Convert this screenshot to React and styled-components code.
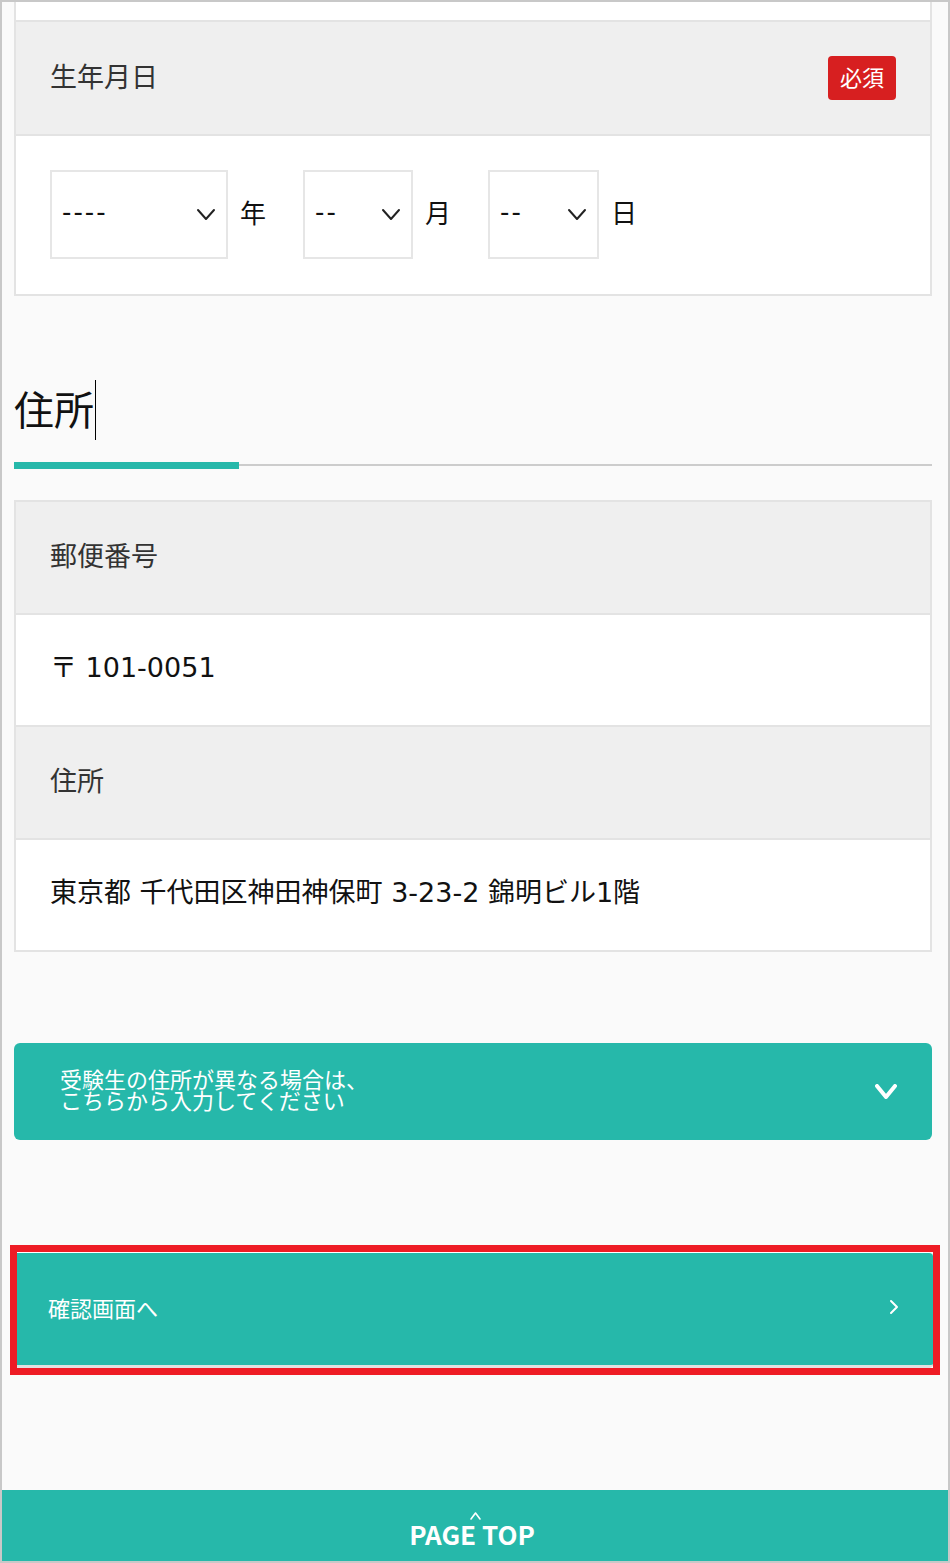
import React from "react";
import styled, { createGlobalStyle } from "styled-components";

const GlobalStyle = createGlobalStyle`
  html, body {
    margin: 0;
    padding: 0;
  }
  body {
    background: #fafafa;
    font-family: "Noto Sans CJK JP", "Noto Sans", sans-serif;
    color: #222;
  }
  * {
    box-sizing: border-box;
  }
`;

const TEAL = "#26b8aa";
const LINE = "#e3e3e3";
const WIDE = `"DejaVu Sans", "Noto Sans CJK JP", sans-serif`;

function Chevron({ dir = "down", w, h, stroke, color }) {
  const pts = {
    down: `2,2 ${w / 2},${h - 2} ${w - 2},2`,
    up: `2,${h - 2} ${w / 2},2 ${w - 2},${h - 2}`,
    right: `2,2 ${w - 2},${h / 2} 2,${h - 2}`,
  }[dir];
  return (
    <svg width={w} height={h} viewBox={`0 0 ${w} ${h}`}>
      <polyline
        points={pts}
        fill="none"
        stroke={color}
        strokeWidth={stroke}
        strokeLinecap="round"
        strokeLinejoin="round"
      />
    </svg>
  );
}

function DateSelect({ width, value, unit }) {
  return (
    <DateGroup>
      <SelectBox $w={width}>
        <SelectValue>{value}</SelectValue>
        <Chevron w={20} h={13} stroke={2} color="#222" />
      </SelectBox>
      <Unit>{unit}</Unit>
    </DateGroup>
  );
}

export default function App() {
  return (
    <>
      <GlobalStyle />
      <Frame>
        <Content>
          <Table $cut>
            <Row $h={18} />
            <Row $head $h={114}>
              <Label>生年月日</Label>
              <Badge>必須</Badge>
            </Row>
            <Row $h={160}>
              <DateRow>
                <DateSelect width={178} value="----" unit="年" />
                <DateSelect width={110} value="--" unit="月" />
                <DateSelect width={111} value="--" unit="日" />
              </DateRow>
            </Row>
          </Table>

          <SectionTitle>
            <Caret>住所</Caret>
          </SectionTitle>
          <Underline />

          <Table $mt={31}>
            <Row $head $h={111}>
              <Label>郵便番号</Label>
            </Row>
            <Row $h={112}>
              <Value>〒 101-0051</Value>
            </Row>
            <Row $head $h={113}>
              <Label>住所</Label>
            </Row>
            <Row $h={112}>
              <Value>東京都 千代田区神田神保町 3-23-2 錦明ビル1階</Value>
            </Row>
          </Table>

          <Accordion>
            <AccordionText>
              受験生の住所が異なる場合は、
              <br />
              こちらから入力してください
            </AccordionText>
            <Chevron w={22} h={15} stroke={4} color="#fff" />
          </Accordion>

          <Highlight>
            <ConfirmButton>
              <span>確認画面へ</span>
              <Chevron dir="right" w={10} h={16} stroke={2} color="#fff" />
            </ConfirmButton>
          </Highlight>
        </Content>

        <Footer>
          <Chevron dir="up" w={13} h={10} stroke={1.6} color="#fff" />
          <FooterText>PAGE TOP</FooterText>
        </Footer>
      </Frame>
    </>
  );
}

const Frame = styled.div`
  width: 950px;
  height: 1563px;
  border: 2px solid #c8c8c8;
  background: #fafafa;
  overflow: hidden;
  display: flex;
  flex-direction: column;
`;

const Content = styled.div`
  padding: 0 16px 0 12px;
  display: flex;
  flex-direction: column;
`;

const Table = styled.div`
  margin-top: ${(p) => p.$mt || 0}px;
  border: 2px solid ${LINE};
  border-top: ${(p) => (p.$cut ? "none" : `2px solid ${LINE}`)};
  background: #fff;
`;

const Row = styled.div`
  height: ${(p) => p.$h}px;
  display: flex;
  align-items: center;
  justify-content: space-between;
  padding: 0 34px 5px;
  background: ${(p) => (p.$head ? "#efefef" : "#fff")};

  & + & {
    border-top: 2px solid ${LINE};
  }
`;

const Label = styled.div`
  font-size: 27px;
  line-height: 36px;
  color: #333;
`;

const Value = styled.div`
  font-family: ${WIDE};
  font-size: 27px;
  line-height: 36px;
  color: #111;
`;

const Badge = styled.div`
  width: 68px;
  height: 44px;
  margin-top: 4px;
  border-radius: 4px;
  background: #d71f20;
  color: #fff;
  font-size: 22px;
  display: flex;
  align-items: center;
  justify-content: center;
  padding-bottom: 3px;
`;

const DateRow = styled.div`
  display: flex;
  align-items: center;
  gap: 37px;
  margin-top: 4px;
`;

const DateGroup = styled.div`
  display: flex;
  align-items: center;
  gap: 12px;
`;

const SelectBox = styled.div`
  width: ${(p) => p.$w}px;
  height: 89px;
  border: 2px solid #e6e6e6;
  display: flex;
  align-items: center;
  justify-content: space-between;
  padding: 0 10px;
`;

const SelectValue = styled.span`
  font-family: ${WIDE};
  font-size: 26px;
  letter-spacing: 2px;
  color: #111;
  margin-bottom: 6px;
`;

const Unit = styled.span`
  font-size: 26px;
  color: #111;
  margin-bottom: 6px;
`;

const SectionTitle = styled.h2`
  margin: 84px 0 0;
  height: 60px;
  font-size: 40px;
  font-weight: 400;
  line-height: 56px;
  color: #111;
`;

const Caret = styled.span`
  display: inline-block;
  height: 60px;
  border-right: 1px solid #000;
  padding-right: 1px;
`;

const Underline = styled.div`
  position: relative;
  height: 7px;
  margin-top: 22px;

  &::before {
    content: "";
    position: absolute;
    left: 0;
    right: 0;
    top: 2px;
    height: 2px;
    background: #cccccc;
  }

  &::after {
    content: "";
    position: absolute;
    left: 0;
    top: 0;
    width: 225px;
    height: 7px;
    background: ${TEAL};
  }
`;

const Accordion = styled.div`
  margin-top: 91px;
  height: 97px;
  border-radius: 6px;
  background: ${TEAL};
  color: #fff;
  display: flex;
  align-items: center;
  justify-content: space-between;
  padding: 0 35px 0 46px;
`;

const AccordionText = styled.div`
  font-size: 22px;
  line-height: 21px;
  margin-bottom: 5px;
`;

const Highlight = styled.div`
  margin: 105px -8px 0 -4px;
  border: 7px solid #ee1c25;
`;

const ConfirmButton = styled.div`
  height: 116px;
  background: ${TEAL};
  border-top: 1px solid #ffffff;
  border-bottom: 3px solid #e0e0e0;
  border-radius: 0 4px 4px 0;
  color: #fff;
  font-size: 22px;
  display: flex;
  align-items: center;
  justify-content: space-between;
  padding: 0 34px 5px 31px;
`;

const Footer = styled.div`
  margin-top: 115px;
  flex: 1;
  background: ${TEAL};
  display: flex;
  flex-direction: column;
  align-items: center;
  padding-top: 21px;
  color: #fff;
`;

const FooterText = styled.div`
  font-size: 26px;
  font-weight: 700;
  line-height: 26px;
  margin-left: -6px;
`;
